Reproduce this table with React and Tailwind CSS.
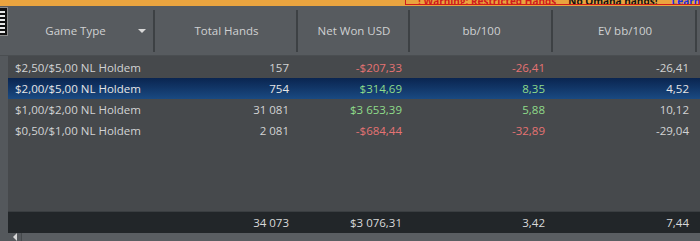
import React from "react";

const cols = [
  { label: "Game Type", w: "w-[147px]", sort: true },
  { label: "Total Hands", w: "w-[143px]" },
  { label: "Net Won USD", w: "w-[112px]" },
  { label: "bb/100", w: "w-[143px]" },
  { label: "EV bb/100", w: "w-[144px]" },
];

const RED = "text-[#e57373]";
const GREEN = "text-[#8fdc8a]";

const rows = [
  { game: "$2,50/$5,00 NL Holdem", hands: "157", won: "-$207,33", bb: "-26,41", ev: "-26,41", tone: RED },
  { game: "$2,00/$5,00 NL Holdem", hands: "754", won: "$314,69", bb: "8,35", ev: "4,52", tone: GREEN, selected: true },
  { game: "$1,00/$2,00 NL Holdem", hands: "31 081", won: "$3 653,39", bb: "5,88", ev: "10,12", tone: GREEN },
  { game: "$0,50/$1,00 NL Holdem", hands: "2 081", won: "-$684,44", bb: "-32,89", ev: "-29,04", tone: RED },
];

function GridIcon() {
  return (
    <div className="w-[8px] h-[29px] mt-[1px] bg-[#111] border border-[#8a8a8a] border-l-0 flex flex-col justify-center gap-[2px] pr-[1px]">
      {[0, 1, 2, 3, 4, 5].map((i) => (
        <div key={i} className="h-[2px] w-[5px] bg-[#e8e8e8]" />
      ))}
    </div>
  );
}

export default function App() {
  return (
    <div
      className="w-[700px] h-[241px] overflow-hidden bg-[#54585c] flex flex-col text-[11.5px] leading-none"
      style={{ fontFamily: '"Open Sans", "Noto Sans", sans-serif' }}
    >
      {/* top banner, mostly scrolled out of view */}
      <div className="h-[6px] shrink-0 bg-[#eaa43f] flex overflow-hidden">
        <div className="w-[405px] shrink-0" />
        <div className="flex-1 h-[5px] border-x border-b border-[#d01c1c] flex items-end overflow-hidden whitespace-nowrap text-[10px] font-bold">
          <span className="shrink-0 text-[#d01c1c] ml-[12px] -mb-[2px]">! Warning: Restricted Hands</span>
          <span className="shrink-0 text-[#111] ml-[12px] -mb-[2px]">No Omaha hands!</span>
          <span className="shrink-0 text-[#1a2fe0] underline ml-[14px] -mb-[2px]">Learn more</span>
        </div>
      </div>

      {/* header */}
      <div className="h-[50px] shrink-0 flex bg-[#575b5f] border-b border-[#4a4e51]">
        <div className="w-[8px] shrink-0">
          <GridIcon />
        </div>
        {cols.map((c) => (
          <div key={c.label} className={`${c.w} shrink-0 relative flex items-center justify-center text-[#cfd1d2]`}>
            <span className={c.sort ? "-ml-[12px]" : ""}>{c.label}</span>
            {c.sort && (
              <span className="absolute right-[9px] top-[23px] w-0 h-0 border-x-[4px] border-x-transparent border-t-[4px] border-t-[#d8d8d8]" />
            )}
            <div className="absolute right-0 top-[4px] bottom-[3px] w-[2px] bg-[#3d4144]" />
          </div>
        ))}
      </div>

      {/* body */}
      <div className="flex-1 flex">
        <div className="w-[8px] shrink-0" />
        <div className="flex-1 flex flex-col bg-[#46494c]">
          <div className="flex-1 pt-[1px]">
            {rows.map((r) => (
              <div
                key={r.game}
                className={`h-[21px] flex items-center ${
                  r.selected ? "bg-gradient-to-b from-[#0a2550] to-[#1a4a82] text-[#e6e6e6]" : "text-[#d2d3d4]"
                }`}
              >
                <div className="w-[147px] shrink-0 pl-[7px]">{r.game}</div>
                <div className="w-[143px] shrink-0 text-right pr-[9px]">{r.hands}</div>
                <div className={`w-[112px] shrink-0 text-right pr-[8px] ${r.tone}`}>{r.won}</div>
                <div className={`w-[143px] shrink-0 text-right pr-[8px] ${r.tone}`}>{r.bb}</div>
                <div className="w-[144px] shrink-0 text-right pr-[8px]">{r.ev}</div>
              </div>
            ))}
          </div>

          {/* totals */}
          <div className="h-[22px] shrink-0 flex items-center bg-[#222629] border-t border-[#3a3e41] text-[#d8d9da]">
            <div className="w-[147px] shrink-0" />
            <div className="w-[143px] shrink-0 text-right pr-[9px]">34 073</div>
            <div className="w-[112px] shrink-0 text-right pr-[8px]">$3 076,31</div>
            <div className="w-[143px] shrink-0 text-right pr-[8px]">3,42</div>
            <div className="w-[144px] shrink-0 text-right pr-[8px]">7,44</div>
          </div>

          {/* scrollbar */}
          <div className="h-[8px] shrink-0 flex bg-[#54585c]">
            <div className="w-[14px] shrink-0 flex items-end justify-center border-r border-[#45494c]">
              <span className="w-0 h-0 border-y-[4px] border-y-transparent border-r-[4px] border-r-[#d8d8d8]" />
            </div>
            <div className="flex-1 bg-[#5a5e62]" />
          </div>
        </div>
      </div>
    </div>
  );
}
